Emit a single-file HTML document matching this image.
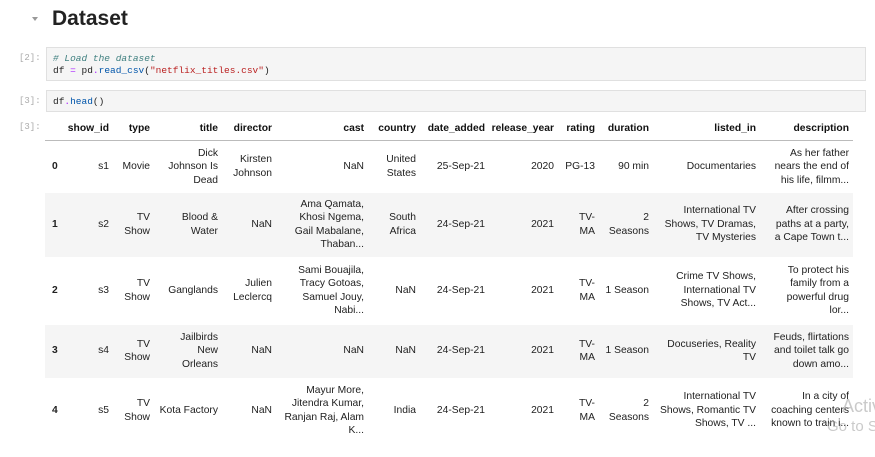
<!DOCTYPE html>
<html><head><meta charset="utf-8"><style>
body{margin:0;width:875px;height:457px;background:#fff;overflow:hidden;position:relative;font-family:"Liberation Sans",sans-serif;color:#212121}
.h{position:absolute;left:52px;top:7px;font-size:21px;font-weight:bold;color:#222}
.tri{position:absolute;left:32px;top:17px;width:0;height:0;border-left:3px solid transparent;border-right:3px solid transparent;border-top:4px solid #999}
.p{position:absolute;left:19px;font-family:"Liberation Mono",monospace;font-size:9px;color:#aaa}
.box{position:absolute;left:46px;width:820px;background:#f5f5f5;border:1px solid #e0e0e0;font-family:"Liberation Mono",monospace;font-size:9.5px;color:#222;box-sizing:border-box;padding:5px 0 0 6px;line-height:12px}
.c{color:#408080;font-style:italic}.s{color:#ba2121}.f{color:#0055aa}.o{color:#aa22ff}
table{position:absolute;left:45px;top:118px;width:808px;border-collapse:collapse;table-layout:fixed;font-size:10.3px;line-height:13.5px}
td,th{text-align:right;vertical-align:middle;padding:0 4px 0 0;white-space:nowrap;overflow:visible}
th{height:22px;font-weight:bold;color:#111}
thead tr{border-bottom:1px solid #bbb}
tbody tr:nth-child(even){background:#f5f5f5}
td:first-child{text-align:left;padding-left:7px;font-weight:bold}
.wm{position:absolute;color:rgba(150,150,150,.5);font-size:15px;white-space:nowrap}
</style></head><body>
<div class="tri"></div><div class="h">Dataset</div>
<div class="p" style="top:53px">[2]:</div>
<div class="box" style="top:47px;height:34px"><span class="c"># Load the dataset</span><br>df <span class="o">=</span> pd<span class="o">.</span><span class="f">read_csv</span>(<span class="s">"netflix_titles.csv"</span>)</div>
<div class="p" style="top:96px">[3]:</div>
<div class="box" style="top:90px;height:22px">df<span class="o">.</span><span class="f">head</span>()</div>
<div class="p" style="top:122px">[3]:</div>
<table>
<colgroup><col style="width:18px"><col style="width:50px"><col style="width:41px"><col style="width:68px"><col style="width:54px"><col style="width:92px"><col style="width:52px"><col style="width:69px"><col style="width:69px"><col style="width:41px"><col style="width:54px"><col style="width:107px"><col style="width:93px"></colgroup>
<thead><tr><th></th><th>show_id</th><th>type</th><th>title</th><th>director</th><th>cast</th><th>country</th><th>date_added</th><th>release_year</th><th>rating</th><th>duration</th><th>listed_in</th><th>description</th></tr></thead>
<tbody>
<tr style="height:52px"><td>0</td><td>s1</td><td>Movie</td><td>Dick<br>Johnson Is<br>Dead</td><td>Kirsten<br>Johnson</td><td>NaN</td><td>United<br>States</td><td>25-Sep-21</td><td>2020</td><td>PG-13</td><td>90 min</td><td>Documentaries</td><td>As her father<br>nears the end of<br>his life, filmm...</td></tr>
<tr style="height:64px"><td>1</td><td>s2</td><td>TV<br>Show</td><td>Blood &amp;<br>Water</td><td>NaN</td><td>Ama Qamata,<br>Khosi Ngema,<br>Gail Mabalane,<br>Thaban...</td><td>South<br>Africa</td><td>24-Sep-21</td><td>2021</td><td>TV-<br>MA</td><td>2<br>Seasons</td><td>International TV<br>Shows, TV Dramas,<br>TV Mysteries</td><td>After crossing<br>paths at a party,<br>a Cape Town t...</td></tr>
<tr style="height:68px"><td>2</td><td>s3</td><td>TV<br>Show</td><td>Ganglands</td><td>Julien<br>Leclercq</td><td>Sami Bouajila,<br>Tracy Gotoas,<br>Samuel Jouy,<br>Nabi...</td><td>NaN</td><td>24-Sep-21</td><td>2021</td><td>TV-<br>MA</td><td>1 Season</td><td>Crime TV Shows,<br>International TV<br>Shows, TV Act...</td><td>To protect his<br>family from a<br>powerful drug<br>lor...</td></tr>
<tr style="height:53px"><td>3</td><td>s4</td><td>TV<br>Show</td><td>Jailbirds<br>New<br>Orleans</td><td>NaN</td><td>NaN</td><td>NaN</td><td>24-Sep-21</td><td>2021</td><td>TV-<br>MA</td><td>1 Season</td><td>Docuseries, Reality<br>TV</td><td>Feuds, flirtations<br>and toilet talk go<br>down amo...</td></tr>
<tr style="height:66px"><td>4</td><td>s5</td><td>TV<br>Show</td><td>Kota Factory</td><td>NaN</td><td>Mayur More,<br>Jitendra Kumar,<br>Ranjan Raj, Alam<br>K...</td><td>India</td><td>24-Sep-21</td><td>2021</td><td>TV-<br>MA</td><td>2<br>Seasons</td><td>International TV<br>Shows, Romantic TV<br>Shows, TV ...</td><td>In a city of<br>coaching centers<br>known to train i...</td></tr>
</tbody></table>
<div class="wm" style="left:842px;top:396px;font-size:18px">Activa</div>
<div class="wm" style="left:827px;top:418px">Go to S</div>
</body></html>
